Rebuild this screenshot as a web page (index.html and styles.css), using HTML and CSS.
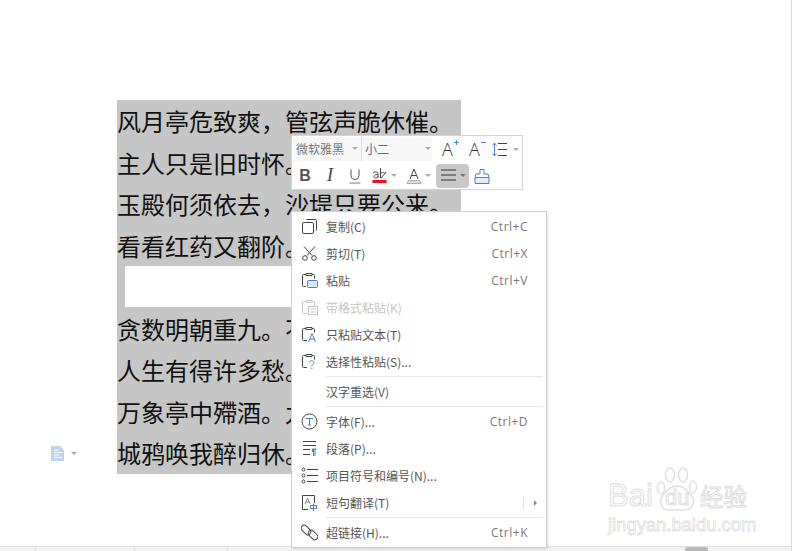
FILE: index.html
```html
<!DOCTYPE html>
<html lang="zh">
<head>
<meta charset="utf-8">
<title>文档</title>
<link rel="stylesheet" href="styles.css">
</head>
<body>
<div class="window">
  <main class="canvas">
    <div class="margin-tool">
      <svg class="doc-icon" width="14" height="15" viewBox="0 0 14 15"><path d="M0 0h9l4 4v11H0z" fill="#c0d2ec"/><path d="M3 4h5M3 6.500h8M3 9h5M3 11.500h8" stroke="#fff" stroke-width="1"/></svg>
      <span class="caret gray"></span>
    </div>
    <section class="selection">
      <p class="line">风月亭危致爽，管弦声脆休催。</p>
      <p class="line">主人只是旧时怀。</p>
      <p class="line">玉殿何须依去，沙堤只要公来。</p>
      <p class="line">看看红药又翻阶。</p>
      <div class="line"><div class="blank"></div></div>
      <p class="line">贪数明朝重九。不</p>
      <p class="line">人生有得许多愁。</p>
      <p class="line">万象亭中殢酒。九</p>
      <p class="line">城鸦唤我醉归休。</p>
    </section>
  </main>
  <footer class="status">
    <span class="cell c1"></span><span class="cell c2"></span><span class="cell c3"></span>
    <span class="thumb"></span>
  </footer>

  <div class="toolbar">
    <div class="tool-row">
      <div class="select font"><span>微软雅黑</span><i class="caret"></i></div>
      <div class="select size"><span>小二</span><i class="caret"></i></div>
      <button class="tool big grow-btn"><span class="grow">A</span><svg class="mark" width="5" height="5" viewBox="0 0 5 5"><path d="M0 2.500h5M2.500 0v5" stroke="#4a86d8"/></svg></button>
      <button class="tool big shrink-btn"><span class="grow">A</span><svg class="mark" width="5" height="5" viewBox="0 0 5 5"><path d="M0 2.500h5" stroke="#4a86d8"/></svg></button>
      <button class="tool spacing">
        <svg width="15" height="15" viewBox="0 0 15 15" fill="none"><path d="M2.500 1v13M.5 3.500l2-2.500 2 2.500M.5 11.500l2 2.500 2-2.500" stroke="#4a86d8"/><path d="M6 1.500h9M6 7.500h9M6 13.500h9" stroke="#444"/></svg><i class="caret"></i>
      </button>
    </div>
    <div class="tool-row second">
      <button class="tool fmt bold">B</button>
      <button class="tool fmt italic">I</button>
      <button class="tool fmt under">
        <svg width="12" height="16" viewBox="0 0 12 16" fill="none"><path d="M2 1.500v6a4 4 0 0 0 8 0v-6" stroke="#555"/><path d="M.5 15h11" stroke="#4a86d8"/></svg>
      </button>
      <button class="tool mark-tool">
        <svg width="15" height="17" viewBox="0 0 15 17" fill="none"><path d="M1 6c1-1.500 5-1.500 5 .5V11M6 7.500c-5-.5-5 3.500-2.500 3.500 1 0 2-.5 2.500-1.500M8.500 1v10M8.500 7c1-2 4-2 4.500 0M9 11l5-6" stroke="#444"/><path d="M.5 13h14v3H.5z" fill="#e8141c"/></svg><i class="caret"></i>
      </button>
      <button class="tool color">
        <svg width="16" height="16" viewBox="0 0 16 16" fill="none"><path d="M4 11 8 1l4 10M5.500 7.500h5" stroke="#444"/><path d="M1 15.500l1.500-3h11l1.500 3z" fill="#f6d8c8" stroke="#888" stroke-width=".6"/></svg><i class="caret"></i>
      </button>
      <button class="tool align">
        <svg width="15" height="13" viewBox="0 0 15 13" fill="none"><path d="M0 1h15M0 6h15M0 11h15" stroke="#333"/></svg><i class="caret dark"></i>
      </button>
      <button class="tool brush">
        <svg width="16" height="16" viewBox="0 0 16 16" fill="none"><path d="M6 1.500h4v4.500h4l1 3.500H1L2 6h4z" stroke="#4a7fc8"/><path d="M1 9.500h14v6H1z" stroke="#4a7fc8" fill="#e4eefa"/></svg>
      </button>
    </div>
  </div>

  <nav class="menu">
    <div class="item"><svg class="ico" width="17" height="17" viewBox="0 0 17 17" fill="none"><path d="M5.500 1.500h9a1 1 0 0 1 1 1v9a1 1 0 0 1-1 1" stroke="#444"/><rect x="1.500" y="4.500" width="11" height="11" rx="1.500" stroke="#444"/></svg><span class="label">复制(C)</span><span class="key">Ctrl+C</span></div>
    <div class="item"><svg class="ico" width="17" height="17" viewBox="0 0 17 17" fill="none"><path d="M3 1.500l8 9M14 1.500l-8 9" stroke="#444"/><circle cx="4" cy="13" r="2.300" stroke="#444"/><circle cx="13" cy="13" r="2.300" stroke="#444"/></svg><span class="label">剪切(T)</span><span class="key">Ctrl+X</span></div>
    <div class="item"><svg class="ico" width="17" height="17" viewBox="0 0 17 17" fill="none"><path d="M5 2.500H2.500a1 1 0 0 0-1 1v10a1 1 0 0 0 1 1H5M5 1.500h6v2H5zM11 2.500h1.500a1 1 0 0 1 1 1v3" stroke="#444"/><rect x="6.500" y="8.500" width="10" height="7" rx="1" stroke="#4a7fc8" fill="#d8e6f8"/></svg><span class="label">粘贴</span><span class="key">Ctrl+V</span></div>
    <div class="item disabled"><svg class="ico" width="17" height="17" viewBox="0 0 17 17" fill="none"><path d="M5 2.500H2.500a1 1 0 0 0-1 1v10a1 1 0 0 0 1 1H6M5 1.500h6v2H5zM11 2.500h1.500a1 1 0 0 1 1 1v3" stroke="#c4c4c4"/><rect x="7.500" y="7.500" width="9" height="8" stroke="#c4c4c4"/><path d="M9.500 10h5M9.500 13h5" stroke="#c4c4c4"/></svg><span class="label">带格式粘贴(K)</span></div>
    <div class="item"><svg class="ico" width="17" height="17" viewBox="0 0 17 17" fill="none"><path d="M5 2.500H2.500a1 1 0 0 0-1 1v10a1 1 0 0 0 1 1H6M5 1.500h6v2H5zM11 2.500h1.500a1 1 0 0 1 1 1v3" stroke="#444"/><path d="M7.500 16 11 7.500l3.500 8.500M8.800 13h4.500" stroke="#4a7fc8"/></svg><span class="label">只粘贴文本(T)</span></div>
    <div class="item"><svg class="ico" width="17" height="17" viewBox="0 0 17 17" fill="none"><path d="M5 2.500H2.500a1 1 0 0 0-1 1v10a1 1 0 0 0 1 1H6M5 1.500h6v2H5zM11 2.500h1.500a1 1 0 0 1 1 1v3" stroke="#444"/><path d="M8.500 9.500c0-2.500 4.500-2.500 4.500 0 0 1.800-2.200 1.800-2.200 3.700M10.800 14.500v1.500" stroke="#4a7fc8"/></svg><span class="label">选择性粘贴(S)...</span></div>
    <hr class="sep">
    <div class="item"><span class="ico"></span><span class="label">汉字重选(V)</span></div>
    <hr class="sep">
    <div class="item"><svg class="ico" width="17" height="17" viewBox="0 0 17 17" fill="none"><circle cx="8.500" cy="8.500" r="7.500" stroke="#444"/><path d="M5 5.500h7M8.500 5.500V12M7 12h3" stroke="#4a7fc8"/></svg><span class="label">字体(F)...</span><span class="key">Ctrl+D</span></div>
    <div class="item"><svg class="ico" width="17" height="17" viewBox="0 0 17 17" fill="none"><path d="M2 1.500h13M2 5.500h13M2 9.500h7M2 14.500h7" stroke="#444"/><path d="M11.500 9h4M14 9v7M12.500 9v7" stroke="#4a7fc8"/><path d="M11 9h2v3h-2z" fill="#4a7fc8"/></svg><span class="label">段落(P)...</span></div>
    <div class="item"><svg class="ico" width="17" height="17" viewBox="0 0 17 17" fill="none"><circle cx="2.500" cy="2.500" r="1.500" stroke="#444"/><circle cx="2.500" cy="8.500" r="1.500" stroke="#444"/><circle cx="2.500" cy="14.500" r="1.500" stroke="#444"/><path d="M6 2.500h11M6 8.500h11M6 14.500h11" stroke="#444"/></svg><span class="label">项目符号和编号(N)...</span></div>
    <div class="item"><svg class="ico" width="17" height="17" viewBox="0 0 17 17" fill="none"><path d="M7 15.500H1.500V1.500h12V9" stroke="#444"/><path d="M4 10 6.500 4 9 10M5 8h3" stroke="#888"/><path d="M9.500 11.500h6v3h-6zM12.500 9.500V17" stroke="#4a7fc8"/></svg><span class="label">短句翻译(T)</span><span class="more"><i class="tri"></i></span></div>
    <hr class="sep">
    <div class="item"><svg class="ico" width="17" height="17" viewBox="0 0 17 17" fill="none"><rect x="-.5" y="3" width="11" height="6" rx="3" transform="rotate(45 5 6)" stroke="#444"/><rect x="6.500" y="8" width="11" height="6" rx="3" transform="rotate(45 12 11)" stroke="#444"/></svg><span class="label">超链接(H)...</span><span class="key">Ctrl+K</span></div>
  </nav>

  <div class="watermark">
    <div class="brand">
      <span class="bai">Bai</span>
      <span class="paw-wrap">
        <svg class="paw" width="42" height="45" viewBox="0 0 42 45" fill="#fff" stroke="#e0e0e0" stroke-width="1.500"><ellipse cx="5" cy="21" rx="3.500" ry="6"/><ellipse cx="14" cy="8" rx="4.500" ry="7"/><ellipse cx="27" cy="8" rx="4.500" ry="7"/><ellipse cx="37" cy="20" rx="3.500" ry="6"/><path d="M21 19c7 0 9 4 14 9 5 6 2 15-7 15H13C5 43 2 34 7 28c5-5 7-9 14-9z"/></svg>
        <span class="du">du</span>
      </span>
      <span class="jy">经验</span>
    </div>
    <div class="site">jingyan.baidu.com</div>
  </div>
</div>
</body>
</html>
```
FILE: styles.css
```css
* { box-sizing: border-box; }
html, body { margin: 0; padding: 0; background: #fff; }
.window {
  position: relative;
  width: 792px;
  height: 551px;
  overflow: hidden;
  display: flex;
  flex-direction: column;
  border-right: 1px solid #dcdcdc;
  font-family: "Noto Sans CJK SC", "Liberation Sans", sans-serif;
}
.canvas {
  flex: 1;
  display: flex;
  padding: 100px 0 0 50px;
  align-items: flex-start;
}
.margin-tool {
  width: 67px;
  height: 15px;
  margin-top: 346px;
  display: flex;
  align-items: center;
  gap: 6px;
  padding-left: 1px;
}
.selection { width: 344px; background: #c6c6c6; }
.line {
  margin: 0;
  height: 41.55px;
  line-height: 41.55px;
  font-size: 24px;
  color: #111;
  white-space: nowrap;
  overflow: hidden;
}
.blank { width: 170px; height: 41px; margin-left: 8px; background: #fff; }

.status {
  height: 5px;
  background: #f2f2f2;
  border-top: 1px solid #e0e0e0;
  display: flex;
  position: relative;
}
.cell { height: 100%; border-right: 1px solid #ddd; }
.c1 { width: 36px; }
.c2 { width: 99px; }
.c3 { width: 93px; }
.thumb {
  position: absolute;
  left: 685px;
  top: 0;
  width: 23px;
  height: 5px;
  border-radius: 3px 3px 0 0;
  background: #b8b8b8;
}

.caret {
  display: inline-block;
  width: 0;
  height: 0;
  border-left: 3px solid transparent;
  border-right: 3px solid transparent;
  border-top: 3px solid #aaa;
}
.caret.dark { border-top-color: #777; }

.toolbar {
  position: absolute;
  left: 291px;
  top: 135px;
  width: 232px;
  height: 55px;
  background: #fff;
  border: 1px solid #d4d4d4;
  padding: 1px;
  display: flex;
  flex-direction: column;
}
.tool-row { display: flex; align-items: center; height: 25px; }
.tool-row.second { height: 25px; margin-top: 2px; }
.tool {
  border: 0;
  padding: 0;
  background: none;
  display: flex;
  align-items: center;
  height: 24px;
  font-family: "Liberation Sans", sans-serif;
  color: #444;
  position: relative;
}
.select {
  height: 24px;
  background: #f7f7f7;
  display: flex;
  align-items: center;
  justify-content: space-between;
  font-size: 12px;
  border-right: 1px solid #ddd;
  padding: 0 3px 2px 3px;
}
.select.font { width: 69px; color: #777; }
.select.size { width: 70px; color: #5a6a88; border-right: 0; padding-right: 1px; }
.big { width: 17px; }
.grow-btn { margin-left: 10px; }
.shrink-btn { margin-left: 10px; }
.grow { font-family: "Open Sans", sans-serif; font-size: 18px; font-weight: 300; color: #333; line-height: 24px; }
.mark { position: absolute; right: 0; top: 3px; }
.spacing { width: 27px; gap: 6px; margin-left: 6px; }
.fmt { width: 24px; font-size: 15px; justify-content: center; margin-right: 1px; }
.bold { font-weight: 700; font-size: 16px; color: #555; }
.italic { font-style: italic; font-family: "Liberation Serif", serif; font-size: 18px; font-weight: 400; }
.mark-tool { width: 25px; gap: 4px; margin-left: 4px; }
.color { width: 25px; gap: 3px; margin-left: 9px; }
.align {
  width: 33px;
  height: 24px;
  gap: 4px;
  padding-left: 5px;
  background: #c8c8c8;
  border-radius: 4px;
  margin-left: 5px;
}
.brush { width: 16px; margin-left: 5px; }

.menu {
  position: absolute;
  left: 291px;
  top: 211px;
  width: 256px;
  height: 337px;
  background: #fff;
  border: 1px solid #d0d0d0;
  box-shadow: 1px 1px 2px rgba(0, 0, 0, .12);
  padding: 1px 0;
}
.item {
  height: 27px;
  display: flex;
  align-items: center;
  padding-left: 9px;
  font-size: 12px;
  color: #555;
  position: relative;
}
.ico { width: 17px; height: 17px; flex: none; margin-right: 8px; }
.label { flex: 1; white-space: nowrap; }
.key {
  font-family: "Open Sans", "Liberation Sans", sans-serif;
  font-size: 12px;
  letter-spacing: .5px;
  color: #777;
  margin-right: 18px;
}
.disabled { color: #c4c4c4; }
.sep {
  margin: 1px 3px 1px 34px;
  height: 1px;
  border: 0;
  background: #e8e8e8;
}
.more {
  width: 23px;
  height: 14px;
  border-left: 1px solid #e2e2e2;
  display: flex;
  align-items: center;
  justify-content: flex-end;
  padding-right: 9px;
}
.tri {
  width: 0;
  height: 0;
  border-top: 3px solid transparent;
  border-bottom: 3px solid transparent;
  border-left: 3px solid #888;
}

.watermark {
  position: absolute;
  left: 608px;
  top: 467px;
  width: 146px;
  color: #fff;
  pointer-events: none;
}
.brand {
  display: flex;
  align-items: flex-end;
  height: 45px;
  font-family: "Liberation Sans", sans-serif;
  -webkit-text-stroke: 1px #dedede;
}
.bai { font-size: 31px; line-height: 32px; width: 48px; flex: none; }
.paw-wrap { position: relative; width: 42px; height: 45px; flex: none; }
.paw { display: block; }
.du {
  position: absolute;
  left: 9px;
  bottom: 2px;
  font-size: 22px;
  line-height: 24px;
}
.jy {
  font-family: "Noto Sans CJK SC", sans-serif;
  font-size: 23.500px;
  line-height: 32px;
  margin-left: 2px;
  white-space: nowrap;
}
.site {
  margin-top: 4px;
  font-family: "Liberation Sans", sans-serif;
  font-size: 18.400px;
  line-height: 18px;
  white-space: nowrap;
  -webkit-text-stroke: .8px #e0e0e0;
}
```
